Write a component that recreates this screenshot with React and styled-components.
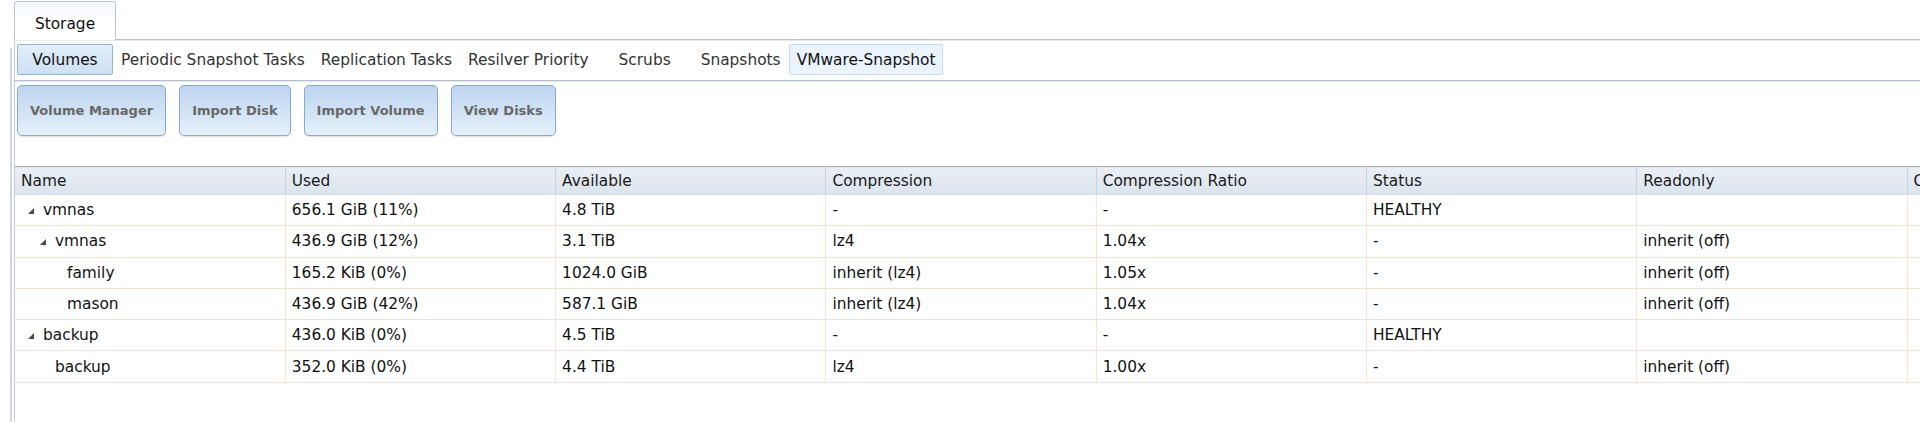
import React from "react";
import styled, { createGlobalStyle, css } from "styled-components";

const GlobalStyle = createGlobalStyle`
  html, body {
    margin: 0;
    padding: 0;
    background: #ffffff;
    overflow: hidden;
  }
  body {
    font-family: "DejaVu Sans", Verdana, sans-serif;
    font-size: 15.4px;
    color: #000;
  }
`;

const Page = styled.div`
  display: flex;
  width: 1920px;
  height: 422px;
  overflow: hidden;
`;

const SideRail = styled.div`
  flex: 0 0 10px;
  margin-top: 48px;
  border-right: 2px solid #d2d5d9;
`;

const Main = styled.div`
  flex: 1;
  min-width: 0;
  margin-left: 2px;
  display: flex;
  flex-direction: column;
`;

const TabStrip = styled.div`
  height: 39px;
  flex: 0 0 39px;
  display: flex;
  align-items: flex-end;
  border-bottom: 1px solid #b4bfcb;
  box-shadow: 0 1px 0 #e4e9ef;
  position: relative;
  z-index: 1;
`;

const MainTab = styled.div`
  width: 102px;
  height: 39px;
  box-sizing: border-box;
  border: 1px solid #bdc7d2;
  border-bottom: none;
  border-radius: 3px 3px 0 0;
  background: linear-gradient(#f4f7fa, #ffffff 45%);
  display: flex;
  align-items: center;
  justify-content: center;
  padding-top: 5px;
  margin-bottom: -1px;
  color: #111;
`;

const Panel = styled.div`
  flex: 1;
  min-height: 0;
  border-left: 1px solid #c3cbd4;
  display: flex;
  flex-direction: column;
  overflow: hidden;
`;

const SubTabBar = styled.div`
  display: flex;
  align-items: center;
  padding: 4px 0 5px 2px;
  border-bottom: 1px solid #b4bfcb;
  box-shadow: 0 1px 0 #e4e9ef;
`;

const SubTab = styled.div`
  min-width: 96px;
  height: 31px;
  box-sizing: border-box;
  padding: 0 7px;
  display: flex;
  align-items: center;
  justify-content: center;
  white-space: nowrap;
  border: 1px solid transparent;
  border-radius: 2px;
  color: #333;
  ${(p) =>
    p.$state === "active" &&
    css`
      background: linear-gradient(#e2eefa, #cde0f4);
      border-color: #92b4d7;
      color: #111;
    `}
  ${(p) =>
    p.$state === "hover" &&
    css`
      background: #ebf4fd;
      border-color: #c6dbf0;
      color: #111;
    `}
`;

const Toolbar = styled.div`
  display: flex;
  gap: 13px;
  padding: 4px 0 0 2px;
  height: 51px;
`;

const ActionButton = styled.button`
  height: 51px;
  box-sizing: border-box;
  padding: 0 12px;
  border: 1px solid #86a9cc;
  border-radius: 5px;
  background: linear-gradient(#bcd5ef, #e6f0fb);
  box-shadow: 0 1px 1px rgba(0, 0, 0, 0.12);
  font-family: "DejaVu Sans", Verdana, sans-serif;
  font-weight: bold;
  font-size: 13px;
  color: #676767;
  cursor: pointer;
  white-space: nowrap;
`;

const TableWrap = styled.div`
  margin-top: 30px;
  overflow: hidden;
`;

const Table = styled.table`
  border-collapse: collapse;
  table-layout: fixed;
  width: ${8 * 270.3}px;
`;

const Col = styled.col`
  width: 270.3px;
`;

const HeadCell = styled.th`
  height: 28px;
  box-sizing: border-box;
  padding: 0 6px;
  text-align: left;
  font-weight: normal;
  color: #1a1a1a;
  white-space: nowrap;
  overflow: hidden;
  background: linear-gradient(#ebf0f6, #dbe3ed);
  border-top: 1px solid #a8adb3;
  border-right: 1px solid #c8d0d9;
  border-bottom: 1px solid #d6dde5;
`;

const Row = styled.tr`
  height: 31.3px;
`;

const Cell = styled.td`
  box-sizing: border-box;
  padding: 0 6px;
  white-space: nowrap;
  overflow: hidden;
  border-right: 1px solid #f4e5d7;
  border-bottom: 1px solid #f4e3d3;
  color: #111;
`;

const NameCell = styled(Cell)`
  padding-left: ${(p) => 13 + p.$level * 12}px;
`;

const NameInner = styled.div`
  display: flex;
  align-items: center;
`;

const ExpanderSlot = styled.span`
  flex: 0 0 15px;
  display: flex;
  align-items: center;
  height: 10px;
`;

const Triangle = styled.span`
  width: 0;
  height: 0;
  margin-top: 2px;
  border-style: solid;
  border-width: 0 0 6px 6px;
  border-color: transparent transparent #4a4a4a transparent;
`;

const subTabs = [
  { label: "Volumes", state: "active" },
  { label: "Periodic Snapshot Tasks" },
  { label: "Replication Tasks" },
  { label: "Resilver Priority" },
  { label: "Scrubs" },
  { label: "Snapshots" },
  { label: "VMware-Snapshot", state: "hover" },
];

const buttons = ["Volume Manager", "Import Disk", "Import Volume", "View Disks"];

const headers = [
  "Name",
  "Used",
  "Available",
  "Compression",
  "Compression Ratio",
  "Status",
  "Readonly",
  "Comments",
];

const rows = [
  { name: "vmnas", level: 0, exp: true, used: "656.1 GiB (11%)", avail: "4.8 TiB", comp: "-", ratio: "-", status: "HEALTHY", ro: "" },
  { name: "vmnas", level: 1, exp: true, used: "436.9 GiB (12%)", avail: "3.1 TiB", comp: "lz4", ratio: "1.04x", status: "-", ro: "inherit (off)" },
  { name: "family", level: 2, used: "165.2 KiB (0%)", avail: "1024.0 GiB", comp: "inherit (lz4)", ratio: "1.05x", status: "-", ro: "inherit (off)" },
  { name: "mason", level: 2, used: "436.9 GiB (42%)", avail: "587.1 GiB", comp: "inherit (lz4)", ratio: "1.04x", status: "-", ro: "inherit (off)" },
  { name: "backup", level: 0, exp: true, used: "436.0 KiB (0%)", avail: "4.5 TiB", comp: "-", ratio: "-", status: "HEALTHY", ro: "" },
  { name: "backup", level: 1, used: "352.0 KiB (0%)", avail: "4.4 TiB", comp: "lz4", ratio: "1.00x", status: "-", ro: "inherit (off)" },
];

export default function App() {
  return (
    <>
      <GlobalStyle />
      <Page>
        <SideRail />
        <Main>
          <TabStrip>
            <MainTab>Storage</MainTab>
          </TabStrip>
          <Panel>
            <SubTabBar>
              {subTabs.map((t) => (
                <SubTab key={t.label} $state={t.state}>
                  {t.label}
                </SubTab>
              ))}
            </SubTabBar>
            <Toolbar>
              {buttons.map((b) => (
                <ActionButton key={b} type="button">
                  {b}
                </ActionButton>
              ))}
            </Toolbar>
            <TableWrap>
              <Table>
                <colgroup>
                  {headers.map((h) => (
                    <Col key={h} />
                  ))}
                </colgroup>
                <thead>
                  <tr>
                    {headers.map((h) => (
                      <HeadCell key={h}>{h}</HeadCell>
                    ))}
                  </tr>
                </thead>
                <tbody>
                  {rows.map((r, i) => (
                    <Row key={i}>
                      <NameCell $level={r.level}>
                        <NameInner>
                          <ExpanderSlot>{r.exp && <Triangle />}</ExpanderSlot>
                          {r.name}
                        </NameInner>
                      </NameCell>
                      <Cell>{r.used}</Cell>
                      <Cell>{r.avail}</Cell>
                      <Cell>{r.comp}</Cell>
                      <Cell>{r.ratio}</Cell>
                      <Cell>{r.status}</Cell>
                      <Cell>{r.ro}</Cell>
                      <Cell />
                    </Row>
                  ))}
                </tbody>
              </Table>
            </TableWrap>
          </Panel>
        </Main>
      </Page>
    </>
  );
}
